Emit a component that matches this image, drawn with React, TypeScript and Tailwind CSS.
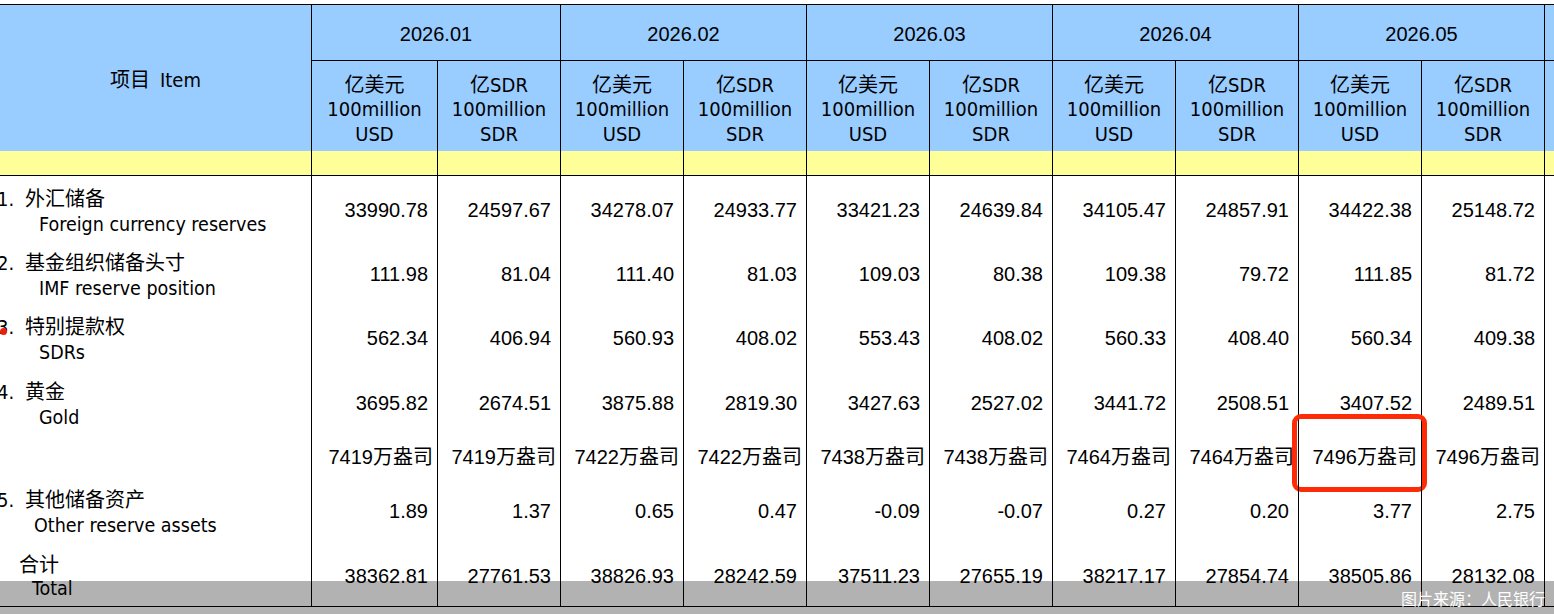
const months = ['2026.01', '2026.02', '2026.03', '2026.04', '2026.05'];

const rows = [
  {
    no: '1.',
    cn: '外汇储备',
    en: 'Foreign currency reserves',
    h: 'h-[68px]',
    values: ['33990.78', '24597.67', '34278.07', '24933.77', '33421.23', '24639.84', '34105.47', '24857.91', '34422.38', '25148.72'],
  },
  {
    no: '2.',
    cn: '基金组织储备头寸',
    en: 'IMF reserve position',
    h: 'h-[60px]',
    values: ['111.98', '81.04', '111.40', '81.03', '109.03', '80.38', '109.38', '79.72', '111.85', '81.72'],
  },
  {
    no: '3.',
    cn: '特别提款权',
    en: 'SDRs',
    h: 'h-[68px]',
    dot: true,
    values: ['562.34', '406.94', '560.93', '408.02', '553.43', '408.02', '560.33', '408.40', '560.34', '409.38'],
  },
  {
    no: '4.',
    cn: '黄金',
    en: 'Gold',
    h: 'h-[62px]',
    values: ['3695.82', '2674.51', '3875.88', '2819.30', '3427.63', '2527.02', '3441.72', '2508.51', '3407.52', '2489.51'],
  },
];

const ounces = ['7419', '7419', '7422', '7422', '7438', '7438', '7464', '7464', '7496', '7496'];
const other = ['1.89', '1.37', '0.65', '0.47', '-0.09', '-0.07', '0.27', '0.20', '3.77', '2.75'];
const total = ['38362.81', '27761.53', '38826.93', '28242.59', '37511.23', '27655.19', '38217.17', '27854.74', '38505.86', '28132.08'];

const label = "font-['DejaVu_Sans_Condensed','DejaVu_Sans','Noto_Sans_CJK_SC',sans-serif]";
const num = "font-['Liberation_Sans','Noto_Sans_CJK_SC',sans-serif]";

function ValueCells({ values, suffix, box, pad = '' }: { values: string[]; suffix?: string; box?: boolean; pad?: string }) {
  return (
    <>
      {values.map((v, i) => (
        <div
          key={i}
          className={`relative flex items-center justify-end border-r border-black whitespace-nowrap ${pad} ${
            i === 0 ? 'w-[126px]' : 'w-[123px]'
          } ${suffix ? 'pr-[4px]' : 'pr-[9px]'}`}
        >
          {v}
          {suffix}
          {box && i === 8 && (
            <div className="absolute left-[-7px] top-[-20px] w-[135px] h-[78px] rounded-[9px] border-[5px] border-[#ff2a06]" />
          )}
        </div>
      ))}
      <div className="flex-1" />
    </>
  );
}

export default function App() {
  return (
    <div className="relative w-[1554px] h-[614px] overflow-hidden bg-white text-[20px] text-black">
      <div className="pt-[4px]">
        {/* header */}
        <div className="flex border-t border-black bg-[#99ccff]">
          <div className={`w-[312px] h-[146px] border-r border-black flex items-center justify-center pt-[4px] ${label}`}>
            <span>项目</span>
            <span className="ml-[10px]">Item</span>
          </div>
          {months.map((m, gi) => (
            <div key={m} className="flex flex-col border-r border-black">
              <div className={`h-[56px] border-b border-black flex items-center justify-center pt-[2px] ${num}`}>{m}</div>
              <div className="flex h-[90px]">
                {['亿美元', '亿SDR'].map((u, si) => (
                  <div
                    key={u}
                    className={`flex flex-col items-center justify-center pt-[7px] leading-[24.5px] ${label} ${
                      gi === 0 && si === 0 ? 'w-[126px]' : si === 0 ? 'w-[123px]' : 'w-[122px]'
                    } ${si === 0 ? 'border-r border-black' : ''}`}
                  >
                    <span>{u}</span>
                    <span>100million</span>
                    <span>{si === 0 ? 'USD' : 'SDR'}</span>
                  </div>
                ))}
              </div>
            </div>
          ))}
          <div className="flex-1">
            <div className="h-[56px] border-b border-black" />
          </div>
        </div>

        {/* yellow spacer row */}
        <div className="flex h-[25px] bg-[#ffff99] border-b border-black">
          <div className="w-[312px] border-r border-black" />
          <ValueCells values={Array(10).fill('')} />
        </div>

        {/* body */}
        <div className={num}>
          {rows.map((r) => (
            <div key={r.no} className={`flex ${r.h}`}>
              <div className={`relative w-[312px] border-r border-black flex flex-col justify-center pt-[4px] leading-[25px] ${label}`}>
                <div className="flex">
                  <span className="-ml-[3px] w-[28px]">{r.no}</span>
                  <span>{r.cn}</span>
                </div>
                <div className="pl-[39px] text-[19.5px]">{r.en}</div>
                {r.dot && <div className="absolute left-[0px] top-[24px] w-[7px] h-[7px] rounded-full bg-[#e8200c]" />}
              </div>
              <ValueCells values={r.values} />
            </div>
          ))}

          <div className="flex h-[46px]">
            <div className="w-[312px] border-r border-black" />
            <ValueCells values={ounces} suffix="万盎司" box />
          </div>

          <div className="flex h-[62px]">
            <div className={`w-[312px] border-r border-black flex flex-col justify-center pt-[3px] leading-[25px] ${label}`}>
              <div className="flex">
                <span className="-ml-[3px] w-[28px]">5.</span>
                <span>其他储备资产</span>
              </div>
              <div className="pl-[34px] text-[19.5px]">Other reserve assets</div>
            </div>
            <ValueCells values={other} />
          </div>

          <div className="flex h-[65px] border-b border-black">
            <div className={`w-[312px] border-r border-black flex flex-col justify-center pt-[5px] leading-[24px] ${label}`}>
              <div className="pl-[19px]">合计</div>
              <div className="pl-[32px] text-[19.5px]">Total</div>
            </div>
            <ValueCells values={total} pad="pt-[4px]" />
          </div>
        </div>
      </div>

      {/* watermark band */}
      <div className="absolute left-0 right-0 bottom-0 h-[33px] bg-black/30 flex items-center justify-end pr-[9px]">
        <span className="text-[16px] text-white font-['Noto_Sans_CJK_SC',sans-serif]">图片来源：人民银行</span>
      </div>
    </div>
  );
}
